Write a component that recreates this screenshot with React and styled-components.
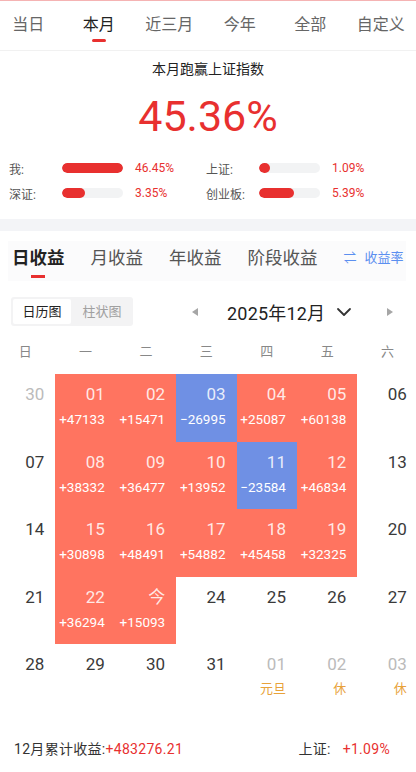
import React from "react";
import styled, { createGlobalStyle } from "styled-components";

const RED = "#e8302f";
const CELL_UP = "#ff7460";
const CELL_DOWN = "#6f90e4";

const GlobalStyle = createGlobalStyle`
  html, body {
    margin: 0;
    padding: 0;
    background: #fff;
    overflow: hidden;
  }
  body {
    font-family: Roboto, "Noto Sans CJK SC", sans-serif;
    color: #222;
  }
`;

const periods = ["当日", "本月", "近三月", "今年", "全部", "自定义"];

const stats = [
  { label: "我:", pct: 100, value: "46.45%" },
  { label: "上证:", pct: 18, value: "1.09%" },
  { label: "深证:", pct: 38, value: "3.35%" },
  { label: "创业板:", pct: 57, value: "5.39%" },
];

const weekdays = ["日", "一", "二", "三", "四", "五", "六"];

// kind: other | plain | up | down
const days = [
  { d: "30", kind: "other" },
  { d: "01", kind: "up", v: "+47133" },
  { d: "02", kind: "up", v: "+15471" },
  { d: "03", kind: "down", v: "−26995" },
  { d: "04", kind: "up", v: "+25087" },
  { d: "05", kind: "up", v: "+60138" },
  { d: "06", kind: "plain" },
  { d: "07", kind: "plain" },
  { d: "08", kind: "up", v: "+38332" },
  { d: "09", kind: "up", v: "+36477" },
  { d: "10", kind: "up", v: "+13952" },
  { d: "11", kind: "down", v: "−23584" },
  { d: "12", kind: "up", v: "+46834" },
  { d: "13", kind: "plain" },
  { d: "14", kind: "plain" },
  { d: "15", kind: "up", v: "+30898" },
  { d: "16", kind: "up", v: "+48491" },
  { d: "17", kind: "up", v: "+54882" },
  { d: "18", kind: "up", v: "+45458" },
  { d: "19", kind: "up", v: "+32325" },
  { d: "20", kind: "plain" },
  { d: "21", kind: "plain" },
  { d: "22", kind: "up", v: "+36294" },
  { d: "今", kind: "up", v: "+15093" },
  { d: "24", kind: "plain" },
  { d: "25", kind: "plain" },
  { d: "26", kind: "plain" },
  { d: "27", kind: "plain" },
  { d: "28", kind: "plain" },
  { d: "29", kind: "plain" },
  { d: "30", kind: "plain" },
  { d: "31", kind: "plain" },
  { d: "01", kind: "other", note: "元旦" },
  { d: "02", kind: "other", note: "休" },
  { d: "03", kind: "other", note: "休" },
];

export default function App() {
  return (
    <Page>
      <GlobalStyle />
      <TopLine />
      <PeriodBar>
        {periods.map((p) => (
          <PeriodTab key={p} active={p === "本月"}>
            {p}
          </PeriodTab>
        ))}
      </PeriodBar>

      <Summary>
        <SummaryTitle>本月跑赢上证指数</SummaryTitle>
        <BigNumber>45.36%</BigNumber>
        <StatGrid>
          {stats.map((s) => (
            <StatRow key={s.label}>
              <StatLabel>{s.label}</StatLabel>
              <Track>
                <Fill style={{ width: `${s.pct}%` }} />
              </Track>
              <StatValue>{s.value}</StatValue>
            </StatRow>
          ))}
        </StatGrid>
      </Summary>

      <Band />

      <ProfitTabs>
        <ProfitTab active>日收益</ProfitTab>
        <ProfitTab>月收益</ProfitTab>
        <ProfitTab>年收益</ProfitTab>
        <ProfitTab>阶段收益</ProfitTab>
        <RateLink>
          <span>⇌</span>收益率
        </RateLink>
      </ProfitTabs>

      <Toolbar>
        <Toggle>
          <ToggleItem active>日历图</ToggleItem>
          <ToggleItem>柱状图</ToggleItem>
        </Toggle>
        <MonthNav>
          <Arrow dir="left" />
          <MonthLabel>
            2025年12月
            <svg width="16" height="10" viewBox="0 0 16 10">
              <path
                d="M2 2l6 6 6-6"
                fill="none"
                stroke="#333"
                strokeWidth="1.8"
                strokeLinecap="round"
                strokeLinejoin="round"
              />
            </svg>
          </MonthLabel>
          <Arrow dir="right" />
        </MonthNav>
      </Toolbar>

      <Calendar>
        {weekdays.map((w) => (
          <Weekday key={w}>{w}</Weekday>
        ))}
        {days.map((day, i) => (
          <DayCell key={i} kind={day.kind}>
            <DayNum kind={day.kind}>{day.d}</DayNum>
            {day.v && <DayValue>{day.v}</DayValue>}
            {day.note && <Holiday>{day.note}</Holiday>}
          </DayCell>
        ))}
      </Calendar>

      <Footer>
        <FooterItem>
          12月累计收益:<Red>+483276.21</Red>
        </FooterItem>
        <FooterItem>
          上证:<Red gap>+1.09%</Red>
        </FooterItem>
      </Footer>
    </Page>
  );
}

const Page = styled.div`
  width: 416px;
  min-height: 772px;
  background: #fff;
`;

const TopLine = styled.div`
  height: 1px;
  background: #f5b3b3;
`;

const PeriodBar = styled.div`
  display: grid;
  grid-template-columns: repeat(6, 70.5px);
  margin-left: -7px;
  height: 49px;
  border-bottom: 1px solid #f1f1f1;
`;

const PeriodTab = styled.div`
  position: relative;
  text-align: center;
  font-size: 16px;
  line-height: 48px;
  color: ${(p) => (p.active ? "#222" : "#666")};

  &::after {
    content: "";
    display: ${(p) => (p.active ? "block" : "none")};
    position: absolute;
    left: 50%;
    bottom: 8px;
    width: 14px;
    height: 3px;
    margin-left: -7px;
    border-radius: 2px;
    background: ${RED};
  }
`;

const Summary = styled.div`
  display: flex;
  flex-direction: column;
  align-items: center;
  padding-top: 8px;
`;

const SummaryTitle = styled.div`
  font-size: 14px;
  line-height: 20px;
  color: #222;
`;

const BigNumber = styled.div`
  font-size: 43px;
  line-height: 52px;
  margin-top: 11px;
  color: ${RED};
`;

const StatGrid = styled.div`
  align-self: stretch;
  display: grid;
  grid-template-columns: 197px 1fr;
  row-gap: 7px;
  padding: 17px 0 0 9px;
`;

const StatRow = styled.div`
  display: flex;
  align-items: center;
  height: 18px;
`;

const StatLabel = styled.div`
  width: 53px;
  font-size: 12px;
  color: #555;
`;

const Track = styled.div`
  width: 61px;
  height: 10px;
  border-radius: 5px;
  background: #f2f3f4;
  overflow: hidden;
`;

const Fill = styled.div`
  height: 100%;
  border-radius: 5px;
  background: ${RED};
`;

const StatValue = styled.div`
  margin-left: 12px;
  font-size: 12px;
  color: ${RED};
`;

const Band = styled.div`
  height: 12px;
  margin-top: 17px;
  background: #f3f4f7;
`;

const ProfitTabs = styled.div`
  display: flex;
  align-items: flex-start;
  gap: 26px;
  margin: 10px 10px 0 8px;
  padding: 2px 0 0 4px;
  height: 38px;
  background: #fbfbfc;
`;

const ProfitTab = styled.div`
  position: relative;
  flex-shrink: 0;
  white-space: nowrap;
  font-size: 17.5px;
  line-height: 30px;
  font-weight: ${(p) => (p.active ? 700 : 400)};
  color: ${(p) => (p.active ? "#222" : "#555")};

  &::after {
    content: "";
    display: ${(p) => (p.active ? "block" : "none")};
    position: absolute;
    left: 50%;
    bottom: -5px;
    width: 14px;
    height: 3px;
    margin-left: -7px;
    background: ${RED};
  }
`;

const RateLink = styled.div`
  margin-left: auto;
  margin-right: 6px;
  flex-shrink: 0;
  white-space: nowrap;
  font-size: 13px;
  line-height: 30px;
  color: #5b8ff0;
  display: flex;
  align-items: center;
  gap: 8px;
`;

const Toolbar = styled.div`
  display: flex;
  align-items: center;
  margin-top: 16px;
  padding-left: 11px;
`;

const Toggle = styled.div`
  display: flex;
  gap: 2px;
  padding: 2px;
  width: 122px;
  box-sizing: border-box;
  height: 29px;
  border-radius: 3px;
  background: #f3f3f4;
`;

const ToggleItem = styled.div`
  width: 59px;
  border-radius: 2px;
  text-align: center;
  font-size: 13px;
  line-height: 25px;
  background: ${(p) => (p.active ? "#fff" : "transparent")};
  color: ${(p) => (p.active ? "#222" : "#a0a0a0")};
`;

const MonthNav = styled.div`
  display: flex;
  align-items: center;
  margin-left: 59px;
`;

const Arrow = styled.div`
  width: 0;
  height: 0;
  border-top: 4.5px solid transparent;
  border-bottom: 4.5px solid transparent;
  ${(p) =>
    p.dir === "left"
      ? "border-right: 6px solid #a6a6a6;"
      : "border-left: 6px solid #a6a6a6; margin-left: 35px;"}
`;

const MonthLabel = styled.div`
  display: flex;
  align-items: center;
  gap: 11px;
  margin-left: 29px;
  font-size: 18px;
  color: #222;
  letter-spacing: 0.2px;
`;

const Calendar = styled.div`
  display: grid;
  grid-template-columns: repeat(7, 60.4px);
  grid-auto-rows: 67.5px;
  grid-template-rows: 40px;
  margin: 8px 0 0 -5px;
`;

const Weekday = styled.div`
  text-align: center;
  font-size: 13px;
  line-height: 36px;
  color: #888;
`;

const DayCell = styled.div`
  display: flex;
  flex-direction: column;
  align-items: flex-end;
  padding: 10px 11px 0 0;
  background: ${(p) =>
    p.kind === "up" ? CELL_UP : p.kind === "down" ? CELL_DOWN : "transparent"};
`;

const DayNum = styled.div`
  font-size: 17px;
  line-height: 20px;
  color: ${(p) =>
    p.kind === "up" || p.kind === "down"
      ? "rgba(255,255,255,0.85)"
      : p.kind === "other"
      ? "#bbb"
      : "#3a3a3a"};
`;

const DayValue = styled.div`
  margin-top: 5px;
  font-size: 13.5px;
  line-height: 20px;
  color: #fff;
`;

const Holiday = styled.div`
  margin-top: 5px;
  font-size: 13px;
  line-height: 20px;
  color: #e8a23a;
`;

const Footer = styled.div`
  display: flex;
  justify-content: space-between;
  padding: 27px 26px 0 14px;
`;

const FooterItem = styled.div`
  font-size: 14px;
  line-height: 20px;
  color: #333;
  letter-spacing: 0.3px;
`;

const Red = styled.span`
  color: ${RED};
  margin-left: ${(p) => (p.gap ? "12px" : "0")};
`;
